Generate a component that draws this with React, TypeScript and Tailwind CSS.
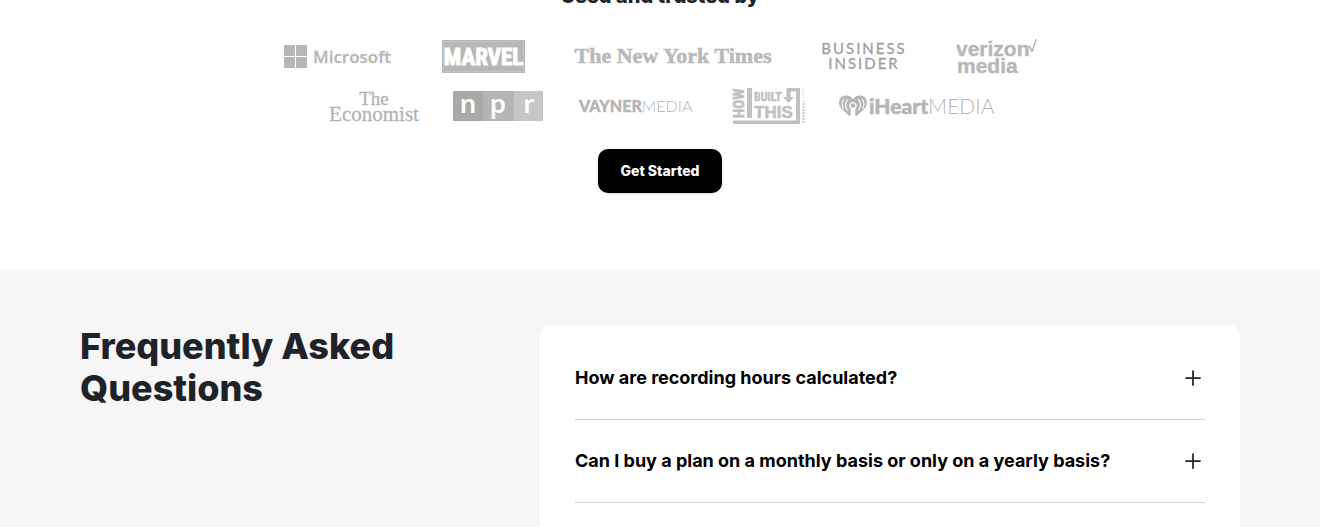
import { useState } from "react";
import { Plus } from "lucide-react";

const questions = [
  "How are recording hours calculated?",
  "Can I buy a plan on a monthly basis or only on a yearly basis?",
];

function Microsoft() {
  return (
    <svg width="109" height="38" role="img" aria-label="Microsoft" fill="#b7b7b7">
      <path d="M0 7h11v11H0zM12 7h11v11H12zM0 19h11v11H0zM12 19h11v11H12z" />
      <text x="29" y="25" fontSize="17" fontWeight="600" stroke="#b7b7b7" strokeWidth=".3" fontFamily="'Open Sans', sans-serif">Microsoft</text>
    </svg>
  );
}

function Marvel() {
  return (
    <svg width="83" height="38" role="img" aria-label="Marvel">
      <path d="M0 2h83v33H0z" fill="#b7b7b7" />
      <path d="M1.500 3.500h80v30h-80z" fill="none" stroke="#c4c4c4" />
      <text x="41.500" y="27" textAnchor="middle" fontSize="23" fontWeight="700" fill="#fff" stroke="#fff" strokeWidth="1" fontFamily="'Roboto Condensed', 'Liberation Sans', sans-serif">MARVEL</text>
    </svg>
  );
}

function NewYorkTimes() {
  return (
    <svg width="198" height="38" role="img" aria-label="The New York Times" fill="#b9b9b9">
      <text x="99" y="25" textAnchor="middle" fontSize="22" fontWeight="700" stroke="#b9b9b9" strokeWidth=".5" fontFamily="'Liberation Serif', serif">The New York Times</text>
    </svg>
  );
}

function BusinessInsider() {
  return (
    <svg width="86" height="38" role="img" aria-label="Business Insider" fill="#9f9f9f" stroke="#9f9f9f" strokeWidth=".3" fontFamily="Lato, sans-serif" fontSize="15">
      <text x="43" y="16" textAnchor="middle" className="tracking-[2px]">BUSINESS</text>
      <text x="43" y="31" textAnchor="middle" className="tracking-[2px]">INSIDER</text>
    </svg>
  );
}

function Verizon() {
  return (
    <svg width="81" height="38" role="img" aria-label="Verizon Media" fill="#b7b7b7" fontFamily="'Liberation Sans', sans-serif" fontSize="21" fontWeight="700" stroke="#b7b7b7" strokeWidth=".4">
      <text x="0" y="18">verizon</text>
      <text x="1" y="35">media</text>
      <path d="M72 7.500h2l2 4L79.500 1H81l-4 13h-1.800z" stroke="none" />
    </svg>
  );
}

function Economist() {
  return (
    <svg width="96" height="38" role="img" aria-label="The Economist" fill="#b3b3b3" stroke="#b3b3b3" strokeWidth=".3" fontFamily="'Liberation Serif', serif">
      <text x="48" y="18" fontSize="19" textAnchor="middle">The</text>
      <text x="48" y="34" fontSize="21" textAnchor="middle">Economist</text>
    </svg>
  );
}

function Npr() {
  return (
    <svg width="90" height="38" role="img" aria-label="NPR" fontFamily="'Noto Sans', sans-serif" fontSize="26" fontWeight="600" textAnchor="middle">
      <path d="M0 4h30v30H0z" fill="#a9a9a9" />
      <path d="M30 4h31v30H30z" fill="#b5b5b5" />
      <path d="M61 4h29v30H61z" fill="#c6c6c6" />
      <text x="15" y="26" fill="#fff">n</text>
      <text x="45" y="26" fill="#fff">p</text>
      <text x="76" y="26" fill="#fff">r</text>
    </svg>
  );
}

function Vayner() {
  return (
    <svg width="125" height="38" role="img" aria-label="VaynerMedia" fill="#b5b5b5" fontFamily="Lato, sans-serif" fontSize="16">
      <text x="5" y="25"><tspan fontWeight="900" stroke="#b5b5b5" strokeWidth=".4">VAYNER</tspan><tspan fontWeight="300">MEDIA</tspan></text>
    </svg>
  );
}

function HowIBuiltThis() {
  return (
    <svg width="78" height="38" role="img" aria-label="How I Built This" fill="#c1c1c1" stroke="#c1c1c1" strokeWidth="0" fontFamily="'Roboto Condensed', 'Liberation Sans', sans-serif" fontWeight="700">
      <text transform="translate(14 31) rotate(-90)" fontSize="15" strokeWidth=".5">HOW</text>
      <path d="M17 1h5v30h-5z" />
      <text x="24" y="14" fontSize="12" strokeWidth=".4">BUILT</text>
      <text x="24" y="31" fontSize="17" strokeWidth=".6" fontFamily="'Liberation Sans', sans-serif">THIS</text>
      <path d="M3 33.500h63V4.500h-5.500V10H64l-5.500 6L53 10h3.500V1H70v36H3z" />
      <path d="M73.500 36V14" fill="none" stroke="#c8c8c8" strokeWidth="2" strokeDasharray="2 1" />
      <path d="M73.500 12V1" fill="none" stroke="#ececec" strokeWidth="2" strokeDasharray="2 1" />
    </svg>
  );
}

function IHeart() {
  return (
    <svg width="156" height="38" role="img" aria-label="iHeartMedia" fill="#b5b5b5" fontFamily="Lato, sans-serif" fontSize="21">
      <path d="M14 12C11.500 8.800 8.500 8.500 7 8.500 3 8.500 0 11.500 0 15.700c0 3.800 2.500 6 5.500 8.800l4.600 4.200c.8.700 1.600.3 1.600-.6v-6.300a3.800 3.800 0 1 1 4.600 0v6.300c0 .9.800 1.300 1.600.6l4.600-4.200c3-2.800 5.500-5 5.500-8.800 0-4.200-3-7.200-7-7.200-1.500 0-4.500.3-7 3.500z" />
      <circle cx="14" cy="18.500" r="2.300" />
      <path d="M8.600 12.700c-2.700 3-2.700 7.500 0 10.500M19.400 12.700c2.700 3 2.700 7.500 0 10.500M5 12c-2.400 3-2.400 6.500-.5 9.500M23 12c2.400 3 2.400 6.500.5 9.500" fill="none" stroke="#fff" strokeWidth="1.100" strokeLinecap="round" />
      <text x="30" y="27"><tspan fontWeight="900" stroke="#b5b5b5" strokeWidth=".5">iHeart</tspan><tspan fontWeight="300">MEDIA</tspan></text>
    </svg>
  );
}

function Question({ text }: { text: string }) {
  const [open, setOpen] = useState(false);
  return (
    <li className="border-b border-[#d2d2d2]">
      <h3>
        <button
          type="button"
          aria-expanded={open}
          onClick={() => setOpen(!open)}
          className="flex h-[82px] w-full items-center justify-between gap-4 text-left text-lg font-bold text-black"
        >
          <span>{text}</span>
          <Plus size={24} strokeWidth={1.75} className="shrink-0 text-[#1d2329]" aria-hidden="true" />
        </button>
      </h3>
    </li>
  );
}

export default function App() {
  return (
    <div className="flex min-h-screen flex-col overflow-x-hidden bg-white font-['Inter',sans-serif] text-[#1d2329]">
      <section className="-mt-4 flex flex-col items-center pb-[77px]">
        <h2 className="text-xl leading-6 font-extrabold">Used and trusted by</h2>
        <div className="mt-[30px] flex flex-col items-center gap-[11px]">
          <div className="flex flex-wrap justify-center gap-x-[49px]">
            <Microsoft />
            <Marvel />
            <NewYorkTimes />
            <BusinessInsider />
            <Verizon />
          </div>
          <div className="flex flex-wrap justify-center gap-x-[31px]">
            <Economist />
            <Npr />
            <Vayner />
            <HowIBuiltThis />
            <IHeart />
          </div>
        </div>
        <a
          href="#start"
          className="mt-6 flex h-11 items-center rounded-[10px] bg-black px-[23px] text-sm font-extrabold text-white shadow-sm"
        >
          Get Started
        </a>
      </section>
      <section className="flex flex-1 bg-[#f6f6f6] px-20 pt-[55px]">
        <div className="mx-auto flex w-full max-w-[1160px] justify-between gap-10">
          <h2 className="max-w-[400px] flex-1 text-4xl leading-[42px] font-extrabold">Frequently Asked Questions</h2>
          <ul className="w-[700px] rounded-t-[10px] bg-white px-[35px] pt-3">
            {questions.map((text) => (
              <Question key={text} text={text} />
            ))}
          </ul>
        </div>
      </section>
    </div>
  );
}
